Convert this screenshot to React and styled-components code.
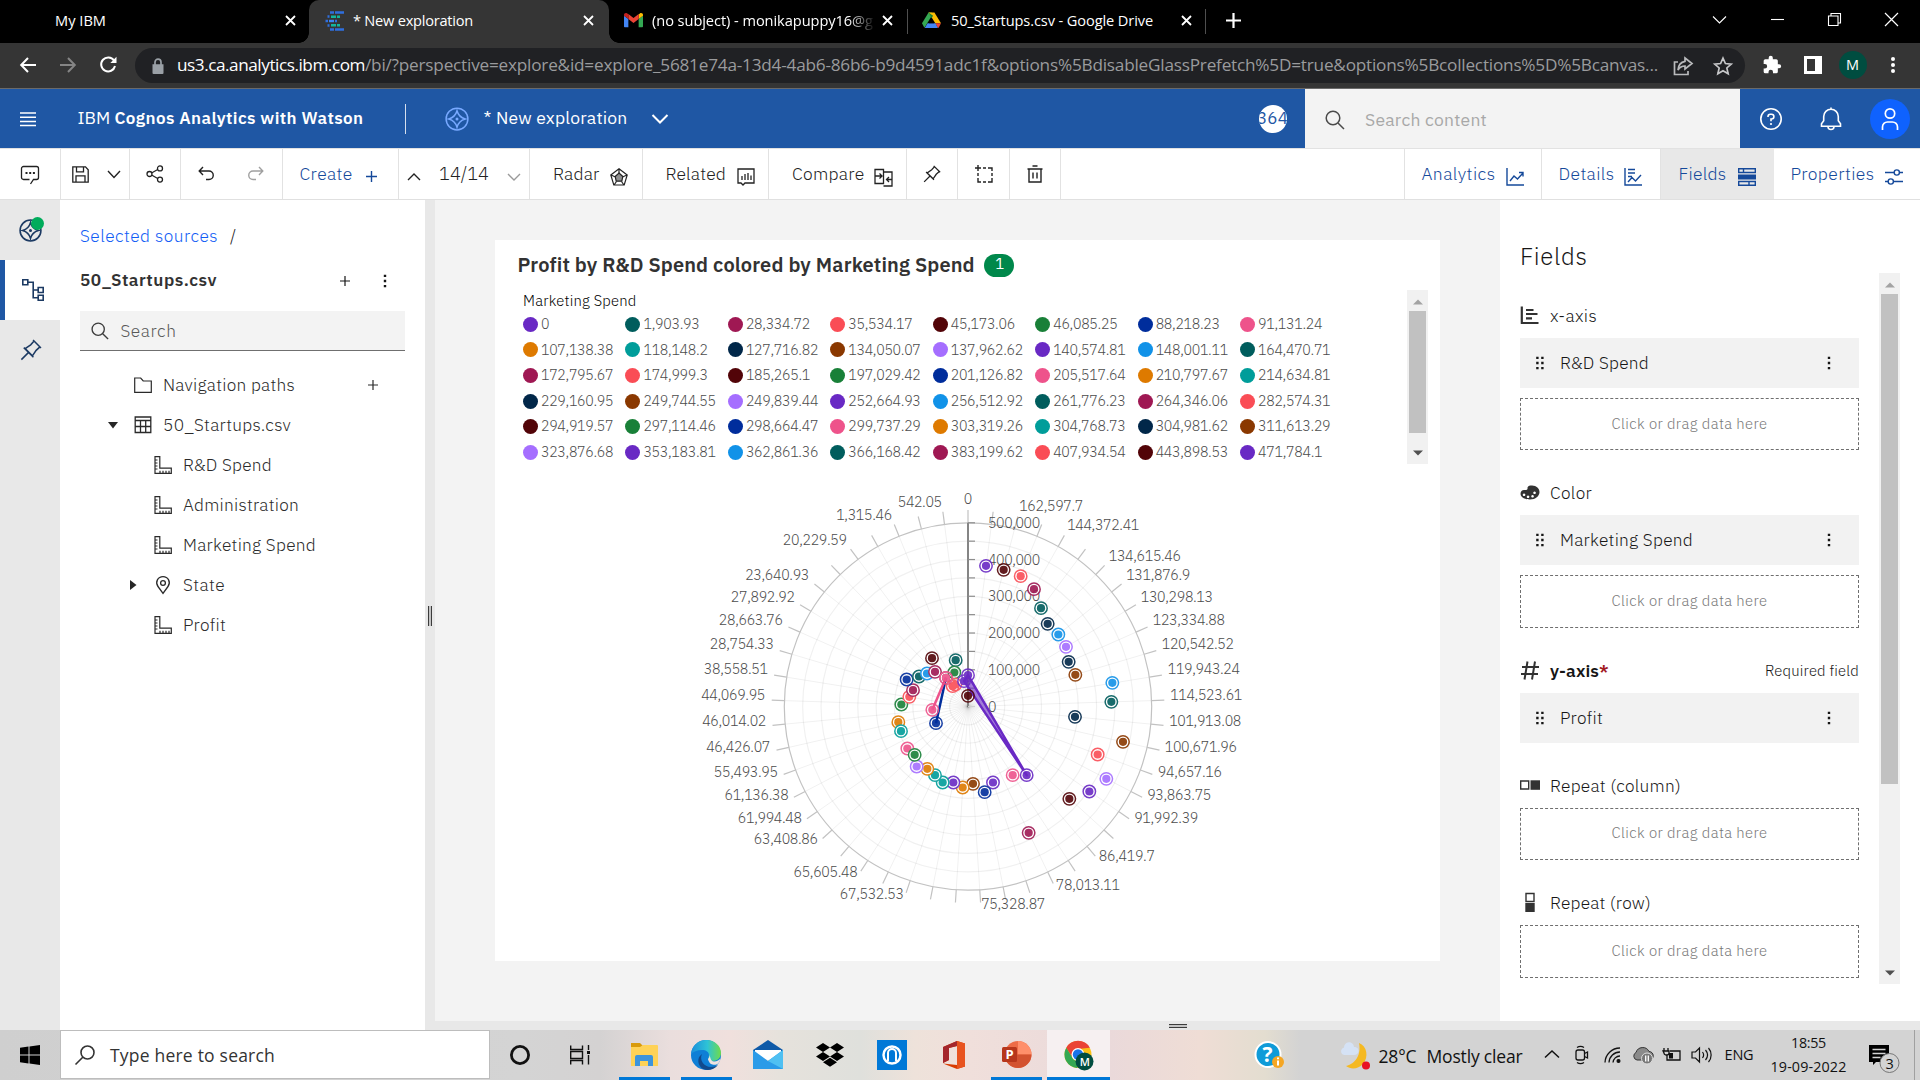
import React, { useLayoutEffect, useRef } from "react";
import styled, { createGlobalStyle, css } from "styled-components";

const Global = createGlobalStyle`
  *, *::before, *::after { box-sizing: border-box; }
  body { margin: 0; overflow: hidden; background: #fff; }
`;

const plex = `"IBM Plex Sans", "Noto Sans", "Open Sans", sans-serif`;
const segoe = `"Segoe UI", "Open Sans", "Noto Sans", sans-serif`;

/* ---------- shared parts ---------- */

const Label = styled.span`
  display: inline-block;
  flex: none;
  white-space: pre;
  margin-left: ${(p) => p.$ml || 0}px;
  font-size: ${(p) => p.$size || 17}px;
  font-weight: ${(p) => p.$weight || "inherit"};
  color: ${(p) => p.$color || "inherit"};
  line-height: 1.3;
`;

/* Spreads the tracking so that a label fills its measured width. */
function Text({ w, ml, size, weight, color, children }) {
  const ref = useRef(null);
  useLayoutEffect(() => {
    const el = ref.current;
    el.style.letterSpacing = "0px";
    const extra = w - el.getBoundingClientRect().width;
    el.style.letterSpacing = extra / el.textContent.length + "px";
  }, [w, children]);
  return (
    <Label ref={ref} $ml={ml} $size={size} $weight={weight} $color={color}>
      {children}
    </Label>
  );
}

const Svg = styled.svg`
  display: block;
  flex: none;
  overflow: visible;
  fill: none;
  stroke: ${(p) => (p.$sw === 0 ? "none" : "currentColor")};
  stroke-width: ${(p) => p.$sw ?? 2};
  margin-left: ${(p) => p.$ml || 0}px;
  margin-top: ${(p) => p.$mt || 0}px;
  color: ${(p) => p.$color || "inherit"};
`;

function Icon({ size = 20, box = 32, sw, ml, mt, color, children }) {
  return (
    <Svg width={size} height={size} viewBox={`0 0 ${box} ${box}`} $sw={sw} $ml={ml} $mt={mt} $color={color}>
      {children}
    </Svg>
  );
}

const Screen = styled.div`
  width: 1920px;
  height: 1080px;
  display: flex;
  flex-direction: column;
  overflow: hidden;
  font-family: ${plex};
  font-weight: 360;
  color: #161616;
`;

const Spacer = styled.div`
  flex: 1;
`;

/* ---------- browser ---------- */

const TabStrip = styled.div`
  flex: none;
  height: 43px;
  background: #000;
  color: #fff;
  display: flex;
  font-family: ${segoe};
  font-weight: 400;
`;

const Tab = styled.div`
  width: ${(p) => p.$w}px;
  flex: none;
  height: 43px;
  display: flex;
  align-items: center;
  padding: 0 ${(p) => p.$pr || 13}px 2px ${(p) => p.$pl || 15}px;
  justify-content: space-between;
  ${(p) =>
    p.$active &&
    css`
      position: relative;
      background: #353535;
      border-radius: 10px 10px 0 0;
      &::before,
      &::after {
        content: "";
        position: absolute;
        bottom: 0;
        width: 10px;
        height: 10px;
        left: -10px;
        background: radial-gradient(circle at 0 0, transparent 9.5px, #353535 10px);
      }
      &::after {
        left: auto;
        right: -10px;
        background: radial-gradient(circle at 100% 0, transparent 9.5px, #353535 10px);
      }
    `}
`;

const TabTitle = styled.div`
  display: flex;
  align-items: center;
  overflow: hidden;
  ${(p) => p.$fade && "-webkit-mask-image: linear-gradient(90deg, #000 90%, transparent 101%);"}
`;

const TabRule = styled.div`
  width: 1px;
  height: 25px;
  margin-top: 9px;
  background: #4f4f4f;
`;

const WindowButton = styled.div`
  width: 57.2px;
  height: 38px;
  display: flex;
  align-items: center;
  justify-content: center;
`;

const NavBar = styled.div`
  flex: none;
  height: 46px;
  background: #353535;
  border-bottom: 1px solid #6a6a6a;
  display: flex;
  align-items: center;
  padding: 0 0 1px 7px;
  color: #fff;
  font-family: ${segoe};
  font-weight: 400;
`;

const NavButton = styled.div`
  width: ${(p) => p.$w || 40}px;
  flex: none;
  display: flex;
  justify-content: center;
  color: ${(p) => p.$color || "#fff"};
`;

const UrlBar = styled.div`
  width: 1609.5px;
  flex: none;
  height: 35px;
  border-radius: 18px;
  background: #202124;
  display: flex;
  align-items: center;
  padding: 1px 12px 0 14px;
  margin-left: 7px;
  color: #9a9b9d;
`;

const Avatar = styled.div`
  width: 28px;
  height: 28px;
  border-radius: 50%;
  background: #004d40;
  color: #fff;
  display: flex;
  align-items: center;
  justify-content: center;
`;

const Close = () => (
  <Icon size={11} box={11} sw={1.8}>
    <path d="M1 1L10 10M10 1L1 10" />
  </Icon>
);

const CognosMark = () => (
  <Icon size={20} box={20} sw={2.4}>
    <path stroke="#2f6fde" d="M6 1.500h4M11 1.500h9M1.500 10h2.500M6 18.500h4M11 18.500h9M3.500 5.500h2M3.500 14.500h2M11 10h2" />
    <path stroke="#12b5a0" d="M7 5.700h5M13 5.700h3M7 14.300h5M13 14.300h3" />
    <path stroke="#3d86f2" d="M5 10h5" />
  </Icon>
);

const GmailMark = () => (
  <Icon size={19} box={24} sw={0}>
    <path fill="#4285f4" d="M1 20.500h4.500V10L0 6v13.500c0 .6.4 1 1 1z" />
    <path fill="#34a853" d="M18.500 20.500H23c.6 0 1-.4 1-1V6l-5.500 4z" />
    <path fill="#fbbc04" d="M18.500 4.500V10L24 6V4.800c0-2-2.300-3-4-1.800z" />
    <path fill="#ea4335" d="M5.500 10V3.800L12 8.700l6.500-4.900V10L12 15z" />
    <path fill="#c5221f" d="M0 4.800V6l5.500 4V3.800L4 3C2.300 1.800 0 2.800 0 4.800z" />
  </Icon>
);

const DriveMark = () => (
  <Icon size={19} box={24} sw={0}>
    <path fill="#34a853" d="M8.300 2h4L13 5 4.500 19 3 21 0 15.500z" />
    <path fill="#fbbc04" d="M8.300 2h7.400L24 15.500h-7.200z" />
    <path fill="#ea4335" d="M16.700 15.500H24L21 21l-1 .5z" />
    <path fill="#4285f4" d="M7 15.500h10l3 6H3.500z" />
    <path fill="#000" d="M12 9.500l3.300 6H8.700z" />
    <path fill="#188038" d="M8.300 2L12 9.300 14 6z" />
  </Icon>
);

function Browser() {
  return (
    <>
      <TabStrip>
        <Tab $w={309} $pl={55}>
          <Text w={51} size={14.6}>My IBM</Text>
          <Close />
        </Tab>
        <Tab $w={300} $active $pr={15}>
          <TabTitle>
            <CognosMark />
            <Text w={120} ml={9} size={14.6}>* New exploration</Text>
          </TabTitle>
          <Close />
        </Tab>
        <Tab $w={298} $pr={14}>
          <TabTitle $fade>
            <GmailMark />
            <Text w={221} ml={9} size={14.6}>(no subject) - monikapuppy16@g</Text>
          </TabTitle>
          <Close />
        </Tab>
        <TabRule />
        <Tab $w={297} $pl={14}>
          <TabTitle>
            <DriveMark />
            <Text w={202} ml={10} size={14.6}>50_Startups.csv - Google Drive</Text>
          </TabTitle>
          <Close />
        </Tab>
        <TabRule />
        <Tab $w={60} $pl={20}>
          <Icon size={15} box={15} sw={2.2}>
            <path d="M7.500 0v15M0 7.500h15" />
          </Icon>
        </Tab>
        <Spacer />
        <WindowButton>
          <Icon size={13} box={13} sw={1.1}>
            <path d="M0 3.500l6.500 6.500L13 3.500" />
          </Icon>
        </WindowButton>
        <WindowButton>
          <Icon size={13} box={13} sw={1.1}>
            <path d="M0 6.500h13" />
          </Icon>
        </WindowButton>
        <WindowButton>
          <Icon size={13} box={13} sw={1.1}>
            <path d="M.5 3h9.500v9.500H.5zM3 3V.5h9.500V10H10" />
          </Icon>
        </WindowButton>
        <WindowButton>
          <Icon size={13} box={13} sw={1.2}>
            <path d="M0 0l13 13M13 0L0 13" />
          </Icon>
        </WindowButton>
      </TabStrip>
      <NavBar>
        <NavButton $w={41}>
          <Icon size={16} box={16} sw={2}>
            <path d="M16 8H1.500M8 1L1.200 8 8 15" />
          </Icon>
        </NavButton>
        <NavButton $w={40} $color="#858585">
          <Icon size={16} box={16} sw={2}>
            <path d="M0 8h14.500M8 1l6.800 7L8 15" />
          </Icon>
        </NavButton>
        <NavButton $w={40}>
          <Icon size={18} box={18} sw={2}>
            <path d="M15 4.500A7 7 0 1 0 16 10" />
            <path d="M17.500 .8v6.200h-6.200z" fill="currentColor" stroke="none" />
          </Icon>
        </NavButton>
        <UrlBar>
          <Icon size={16} box={16} sw={0} color="#9aa0a6" ml={1}>
            <path fill="currentColor" d="M2.500 6.200h11V15a1 1 0 0 1-1 1h-9a1 1 0 0 1-1-1z" />
            <path d="M5 7V4.200a3 3 0 0 1 6 0V7" stroke="currentColor" strokeWidth="1.7" />
          </Icon>
          <Text w={188} ml={11} size={17.2} color="#fff">us3.ca.analytics.ibm.com</Text>
          <Text w={1293} size={17.2}>
            /bi/?perspective=explore&amp;id=explore_5681e74a-13d4-4ab6-86b6-b9d4591adc1f&amp;options%5BdisableGlassPrefetch%5D=true&amp;options%5Bcollections%5D%5Bcanvas...
          </Text>
          <Spacer />
          <Icon size={20} box={20} sw={1.7} color="#b9babc">
            <path d="M5 6H1.500v12.500H15V15" />
            <path d="M12 2l7 5.500-7 5.500v-3C8.500 10 6.500 11.500 5 14c.3-4.500 3-8 7-8.700z" />
          </Icon>
          <Icon size={20} box={24} sw={2} color="#c6c7c9" ml={20}>
            <path d="M12 2.500l2.900 6.500 7 .7-5.300 4.700 1.600 7L12 17.700l-6.200 3.700 1.600-7L2.100 9.700l7-.7z" />
          </Icon>
        </UrlBar>
        <NavButton $w={55}>
          <Icon size={20} box={24} sw={0}>
            <path
              fill="currentColor"
              d="M20.500 11H19V7a2 2 0 0 0-2-2h-4V3.500a2.500 2.500 0 0 0-5 0V5H4a2 2 0 0 0-2 2v3.800h1.500a2.700 2.700 0 0 1 0 5.400H2V20a2 2 0 0 0 2 2h3.800v-1.500a2.700 2.700 0 0 1 5.400 0V22H17a2 2 0 0 0 2-2v-4h1.500a2.500 2.500 0 0 0 0-5z"
            />
          </Icon>
        </NavButton>
        <NavButton $w={27}>
          <Icon size={18} box={18} sw={0}>
            <path fill="currentColor" fillRule="evenodd" d="M0 0h18v18H0zM3 3v12h8V3z" />
          </Icon>
        </NavButton>
        <NavButton $w={53}>
          <Avatar>
            <Text w={14} size={14.5}>M</Text>
          </Avatar>
        </NavButton>
        <NavButton $w={27}>
          <Icon size={18} box={18} sw={0}>
            <circle fill="currentColor" cx="9" cy="3" r="2" />
            <circle fill="currentColor" cx="9" cy="9" r="2" />
            <circle fill="currentColor" cx="9" cy="15" r="2" />
          </Icon>
        </NavButton>
      </NavBar>
    </>
  );
}

/* ---------- application header ---------- */

const AppHeader = styled.div`
  flex: none;
  height: 59px;
  background: #1f57a4;
  color: #fff;
  display: flex;
  align-items: center;
  padding-left: 20px;
`;

const HeaderRule = styled.div`
  width: 1px;
  height: 30px;
  margin: 0 39px 0 41px;
  background: #d5dfee;
`;

const TrialDays = styled.div`
  width: 28px;
  height: 28px;
  border-radius: 50%;
  background: #fff;
  color: #1f57a4;
  overflow: hidden;
  display: flex;
  align-items: center;
  justify-content: center;
  margin-right: 18.5px;
`;

const ContentSearch = styled.div`
  width: 435px;
  height: 59px;
  background: #f3f3f3;
  color: #4a4a4a;
  display: flex;
  align-items: center;
  padding: 3px 0 0 20px;
`;

const HeaderActions = styled.div`
  width: 180px;
  display: flex;
  align-items: center;
  padding-left: 18.5px;
`;

const UserBadge = styled.div`
  width: 40px;
  height: 40px;
  border-radius: 50%;
  background: #0f62fe;
  margin-left: 27px;
  display: flex;
  align-items: center;
  justify-content: center;
`;

const Compass = ({ size = 24, color, sw = 2 }) => (
  <Icon size={size} box={32} sw={sw} color={color}>
    <circle cx="16" cy="16" r="14.500" />
    <path d="M16 5c1.500 5.500 5.500 9.500 11 11-5.500 1.500-9.500 5.500-11 11-1.500-5.500-5.500-9.500-11-11 5.500-1.500 9.500-5.500 11-11z" />
    <circle cx="16" cy="16" r="1" fill="currentColor" />
  </Icon>
);

const SearchIcon = ({ size = 20, color }) => (
  <Icon size={size} box={20} sw={1.5} color={color}>
    <circle cx="8" cy="8" r="6.800" />
    <path d="M13 13l6 6" />
  </Icon>
);

function Header() {
  return (
    <AppHeader>
      <Icon size={16} box={16} sw={1.5}>
        <path d="M0 2h16M0 6.200h16M0 10.400h16M0 14.500h16" />
      </Icon>
      <Text w={37} ml={41.5} size={17.5} weight={400}>{"IBM "}</Text>
      <Text w={249} size={17} weight={600}>Cognos Analytics with Watson</Text>
      <HeaderRule />
      <Compass color="#78a9ff" size={24} />
      <Text w={144} ml={15} size={17.5} weight={400}>* New exploration</Text>
      <Icon size={16} box={16} sw={2} ml={24}>
        <path d="M.5 4L8 11.500 15.500 4" />
      </Icon>
      <Spacer />
      <TrialDays>
        <Text w={31} size={17} weight={400}>364</Text>
      </TrialDays>
      <ContentSearch>
        <SearchIcon />
        <Text w={122} ml={20} size={17.5} weight={400} color="#a8a8a8">Search content</Text>
      </ContentSearch>
      <HeaderActions>
        <Icon size={24} box={24} sw={1.6}>
          <circle cx="12" cy="12" r="10.200" />
          <path d="M9 10V9.500a2.300 2.300 0 0 1 2.300-2.300h1.200a2.400 2.400 0 0 1 0 4.800H12v2.200" />
          <circle cx="12" cy="17" r="1.100" fill="currentColor" stroke="none" />
        </Icon>
        <Icon size={24} box={24} sw={1.6} ml={36}>
          <path d="M2.500 19.200v-2.400l2.200-3V9.500a7.300 7.300 0 0 1 14.600 0v4.300l2.200 3v2.400zM9 19.500a3 3 0 0 0 6 0M12 2.500V.5" />
        </Icon>
        <UserBadge>
          <Icon size={24} box={24} sw={1.7}>
            <circle cx="12" cy="6.500" r="4.700" />
            <path d="M4.500 23v-3a5 5 0 0 1 5-5h5a5 5 0 0 1 5 5v3" />
          </Icon>
        </UserBadge>
      </HeaderActions>
    </AppHeader>
  );
}

/* ---------- toolbar ---------- */

const Toolbar = styled.div`
  flex: none;
  height: 52px;
  border-top: 1px solid #e2e2e2;
  border-bottom: 1px solid #e0e0e0;
  background: #fff;
  display: flex;
`;

const Tool = styled.div`
  width: ${(p) => p.$w}px;
  flex: none;
  display: flex;
  align-items: center;
  padding-left: ${(p) => p.$pl || 0}px;
  justify-content: ${(p) => (p.$pl ? "flex-start" : "center")};
  border-right: ${(p) => (p.$last ? 0 : 1)}px solid #e2e2e2;
  background: ${(p) => (p.$on ? "#e8e8e8" : "transparent")};
  color: ${(p) => (p.$blue ? "#15499a" : "#222")};
`;

const PinIcon = ({ size, color, sw = 2 }) => (
  <Icon size={size} box={32} sw={sw} color={color}>
    <path d="M19 1.500L30.500 13M2 30l10.500-10.500M5.500 12.500l14 14M20.500 3l-5 5.500-8 5.500L18 24.500l5.500-8 5.500-5" />
  </Icon>
);

const Dots = ({ ml, color }) => (
  <Icon size={14} box={14} sw={0} ml={ml} color={color}>
    <path fill="currentColor" d="M5.800 .7h2.400v2.400H5.800zM5.800 5.800h2.400v2.400H5.800zM5.800 10.900h2.400v2.400H5.800z" />
  </Icon>
);

function Tools() {
  return (
    <Toolbar>
      <Tool $w={61}>
        <Icon size={20} box={20} sw={1.3}>
          <path d="M9.500 15.500H3.500A2 2 0 0 1 1.500 13.500v-9a2 2 0 0 1 2-2h13a2 2 0 0 1 2 2v9a2 2 0 0 1-2 2H13.500L10.500 20" />
          <path d="M5.500 8h2v2h-2zM9.200 8h2v2h-2zM12.900 8h2v2h-2z" fill="currentColor" stroke="none" />
        </Icon>
      </Tool>
      <Tool $w={69} $pl={11}>
        <Icon size={17} box={17} sw={1.3}>
          <path d="M.8.8h12.700l2.700 3v12.400H.8zM4.500.8v5h7v-5M4 16V9.800h9V16" />
        </Icon>
        <Icon size={12} box={12} sw={1.4} ml={19}>
          <path d="M0 3l6 6.500L12 3" />
        </Icon>
      </Tool>
      <Tool $w={51}>
        <Icon size={18} box={18} sw={1.3}>
          <circle cx="3.500" cy="9" r="2.500" />
          <circle cx="14" cy="3.400" r="2.500" />
          <circle cx="14" cy="14.600" r="2.500" />
          <path d="M6 7.700l5.700-3.200M6 10.300l5.700 3.200" />
        </Icon>
      </Tool>
      <Tool $w={102} $pl={17}>
        <Icon size={16} box={16} sw={1.4}>
          <path d="M5 1L1.200 5 5 9M1.500 5H11a4 4 0 0 1 0 8.500H8" />
        </Icon>
        <Icon size={16} box={16} sw={1.4} ml={34} color="#a0a0a0">
          <path d="M11 1l3.800 4L11 9M14.500 5H5a4 4 0 0 0 0 8.500h3" />
        </Icon>
      </Tool>
      <Tool $w={116} $pl={16.5} $blue>
        <Text w={53} size={17.5}>Create</Text>
        <Icon size={11} box={11} sw={1.4} ml={13.5} mt={5}>
          <path d="M5.500 0v11M0 5.500h11" />
        </Icon>
      </Tool>
      <Tool $w={131} $pl={9}>
        <Icon size={12} box={12} sw={1.4} mt={5}>
          <path d="M0 9l6-6 6 6" />
        </Icon>
        <Text w={50} ml={19} size={18}>14/14</Text>
        <Icon size={12} box={12} sw={1.4} ml={19} mt={5} color="#9a9a9a">
          <path d="M0 3l6 6 6-6" />
        </Icon>
      </Tool>
      <Tool $w={113} $pl={23}>
        <Text w={46.5} size={17.5}>Radar</Text>
        <Icon size={18} box={18} sw={1.2} ml={10.5} mt={5}>
          <path d="M9 .8L17.200 7l-3 10H3.800l-3-10zM9 .8V6M17 7l-4.500 2M14 17l-2.500-3.500M4 17l2.500-3.500M1 7l4.500 2" />
          <path d="M9 5l3.800 3.500-1 4.700H6.200L5.200 8.500z" fill="currentColor" fillOpacity=".5" />
        </Icon>
      </Tool>
      <Tool $w={126} $pl={22.5}>
        <Text w={60.5} size={17.5}>Related</Text>
        <Icon size={18} box={18} sw={1.3} ml={10.5} mt={6}>
          <path d="M1 1h16v14H8l-2 2-2-2H1zM5 8v4M8 6v6M11 5v7M14 7.500V12" />
        </Icon>
      </Tool>
      <Tool $w={138} $pl={23}>
        <Text w={72.5} size={17.5}>Compare</Text>
        <Icon size={19} box={19} sw={1.3} ml={9.5} mt={6}>
          <path d="M1 1.500h8.500v14H1zM9.500 4H18v14H9.500M1.500 8H8M5.500 5.500L8 8l-2.500 2.500M18 11.500h-5M15 9l-2.500 2.500L15 14" />
        </Icon>
      </Tool>
      <Tool $w={51}>
        <PinIcon size={18} sw={2.2} />
      </Tool>
      <Tool $w={52}>
        <Icon size={18} box={18} sw={1.4}>
          <path d="M3 0v6M0 3h6M8 3h3M13 3h4v3M17 8v3M17 13v4h-4M11 17H8M6 17H3v-4M3 11V8" />
        </Icon>
      </Tool>
      <Tool $w={51}>
        <Icon size={18} box={18} sw={1.4}>
          <path d="M1.500 4h15M3 4v13h12V4M6.500 1h5M7 7.500v6M11 7.500v6" />
        </Icon>
      </Tool>
      <Tool $w={344} />
      <Tool $w={137} $pl={16.5} $blue>
        <Text w={74} size={17.5}>Analytics</Text>
        <Icon size={18} box={18} sw={1.4} ml={10.5} mt={6}>
          <path d="M1 0v17h17M4 13l4-5 3.500 3L17 5M13 4.500h4v4" />
        </Icon>
      </Tool>
      <Tool $w={119} $pl={16.5} $blue>
        <Text w={56} size={17.5}>Details</Text>
        <Icon size={18} box={18} sw={1.4} ml={9.5} mt={6}>
          <path d="M1 0v17h17M4 1.500h7M4 5h7M4 8.500h4M4 14l4-4.500 3.500 3.500L17 7" />
        </Icon>
      </Tool>
      <Tool $w={113} $pl={17.5} $blue $on $last>
        <Text w={48} size={17.5}>Fields</Text>
        <Icon size={18} box={18} sw={1.4} ml={11.5} mt={6}>
          <path d="M.7.7h16.600v3.800H.7zM.7 13.500h16.600v3.800H.7zM5.500 1v3.500M11 13.500v4" />
          <path d="M0 6.500h18v5H0z" fill="currentColor" stroke="none" />
        </Icon>
      </Tool>
      <Tool $w={145} $pl={16.5} $blue $last>
        <Text w={84} size={17.5}>Properties</Text>
        <Icon size={18} box={18} sw={1.4} ml={10.5} mt={6}>
          <path d="M0 4.500h9M14.500 4.500H18M0 13.500h3M8.500 13.500H18" />
          <circle cx="11.800" cy="4.500" r="2.600" />
          <circle cx="5.800" cy="13.500" r="2.600" />
        </Icon>
      </Tool>
    </Toolbar>
  );
}

/* ---------- left side ---------- */

const Workspace = styled.div`
  flex: none;
  height: 830px;
  display: flex;
`;

const Rail = styled.div`
  width: 60px;
  background: #e8e8e8;
  display: flex;
  flex-direction: column;
`;

const RailItem = styled.div`
  height: 60px;
  display: flex;
  align-items: center;
  justify-content: center;
  padding-left: ${(p) => (p.$on ? 0 : 1)}px;
  position: relative;
  color: #1c3a63;
  background: ${(p) => (p.$on ? "#fff" : "transparent")};
  border-left: ${(p) => (p.$on ? "5px solid #1f57a4" : "0")};
`;

const StatusDot = styled.div`
  position: absolute;
  left: 31px;
  top: 17px;
  width: 13px;
  height: 13px;
  border-radius: 50%;
  background: #00ac5b;
`;

const Sources = styled.div`
  width: 365px;
  background: #fff;
  padding: 25px 20px 0;
`;

const SourceLine = styled.div`
  display: flex;
  align-items: center;
  height: ${(p) => p.$h}px;
  padding-top: ${(p) => p.$pt || 0}px;
`;

const SearchBox = styled.div`
  height: 40px;
  background: #f3f3f3;
  border-bottom: 1px solid #6f6f6f;
  display: flex;
  align-items: center;
  padding: 1px 0 0 10.5px;
`;

const Tree = styled.div`
  padding-top: 14px;
`;

const TreeRow = styled.div`
  height: 40px;
  display: flex;
  align-items: center;
  padding-left: ${(p) => (p.$deep ? 45 : 25)}px;
  color: #2a2a2a;
`;

const Caret = styled.div`
  width: 18px;
  flex: none;
  display: flex;
  justify-content: center;
  padding-right: 2px;
  margin-right: 11px;
`;

const Splitter = styled.div`
  width: 10px;
  background: #e8e8e8;
  display: flex;
  justify-content: center;
  padding-top: 406px;
`;

const Grip = styled.div`
  width: ${(p) => (p.$flat ? 18 : 4)}px;
  height: ${(p) => (p.$flat ? 4 : 20)}px;
  border: 1px solid #3c3c3c;
  border-width: ${(p) => (p.$flat ? "1px 0" : "0 1px")};
  background: #c4c4c4;
`;

const Plus = ({ ml }) => (
  <Icon size={10} box={10} sw={1.2} ml={ml}>
    <path d="M5 0v10M0 5h10" />
  </Icon>
);

const Ruler = () => (
  <Icon size={18} box={18} sw={1.2}>
    <path d="M1 .7h4.800v11.500H17.300V17.300H1zM1 4h2.500M1 7h2.500M1 10h2.500M1 13h2.500M6 17.300v-2.500M9 17.300v-2.500M12 17.300v-2.500M15 17.300v-2.500" />
  </Icon>
);

const Folder = () => (
  <Icon size={18} box={18} sw={1.2}>
    <path d="M.7 2h6l2.500 3h8.100v11.300H.7z" />
  </Icon>
);

const Grid = () => (
  <Icon size={18} box={18} sw={1.3}>
    <path d="M1.200 1h15.600v15.500H1.200zM1 4.500h16M1 10.500h16M6.500 4.500v12M11.700 4.500v12" />
  </Icon>
);

const MapPin = () => (
  <Icon size={18} box={18} sw={1.3}>
    <path d="M9 17.300L4 10.500C.8 6 4 .7 9 .7s8.200 5.300 5 9.800z" />
    <circle cx="9" cy="7" r="2.400" />
  </Icon>
);

const fields = [
  ["Navigation paths", 132, Folder, false, ""],
  ["50_Startups.csv", 128, Grid, false, "down"],
  ["R&D Spend", 89, Ruler, true, ""],
  ["Administration", 116, Ruler, true, ""],
  ["Marketing Spend", 133, Ruler, true, ""],
  ["State", 42, MapPin, true, "right"],
  ["Profit", 43, Ruler, true, ""],
];

function LeftSide() {
  return (
    <>
      <Rail>
        <RailItem>
          <Compass size={23} sw={2.2} />
          <StatusDot />
        </RailItem>
        <RailItem $on>
          <Icon size={22} box={22} sw={1.6}>
            <path d="M.8.8h5v5h-5zM16.200 8.500h5v5h-5zM16.200 16.200h5v5h-5zM6 3.300h5.200v15.500h5M11.200 11h5" />
          </Icon>
        </RailItem>
        <RailItem>
          <PinIcon size={22} sw={2.2} />
        </RailItem>
      </Rail>
      <Sources>
        <SourceLine $h={22}>
          <Text w={138} size={17.3} color="#0f5cf5">Selected sources</Text>
          <Text w={7} ml={12} size={17.3}>/</Text>
        </SourceLine>
        <SourceLine $h={64} $pt={3}>
          <Text w={137} size={17.2} weight={600} color="#323232">50_Startups.csv</Text>
          <Plus ml={123} />
          <Dots ml={28} />
        </SourceLine>
        <SearchBox>
          <SearchIcon size={18} color="#3c3c3c" />
          <Text w={56} ml={12} size={17.3} color="#585858">Search</Text>
        </SearchBox>
        <Tree>
          {fields.map(([name, w, Glyph, deep, caret]) => (
            <TreeRow key={name} $deep={deep}>
              <Caret>
                {caret && (
                  <Icon size={10} box={10} sw={0}>
                    <path fill="#262626" d={caret === "down" ? "M0 2h10L5 8.500z" : "M2 0v10l6.500-5z"} />
                  </Icon>
                )}
              </Caret>
              <Glyph />
              <Text w={w} ml={11} size={17.3}>{name}</Text>
              {name === "Navigation paths" && <Plus ml={73} />}
            </TreeRow>
          ))}
        </Tree>
      </Sources>
      <Splitter>
        <Grip />
      </Splitter>
    </>
  );
}

/* ---------- chart ---------- */

const MainArea = styled.div`
  width: 1485px;
  display: flex;
  flex-direction: column;
`;

const MainRow = styled.div`
  height: 821px;
  display: flex;
`;

const Canvas = styled.div`
  width: 1065px;
  background: #f3f3f3;
  padding: 40px 60px 0;
`;

const Card = styled.div`
  width: 945px;
  height: 721px;
  background: #fff;
  padding-top: 12px;
`;

const CardTitle = styled.div`
  height: 26px;
  display: flex;
  align-items: center;
  padding-left: 22.5px;
  color: #323232;
`;

const CountBadge = styled.div`
  width: 30px;
  height: 23px;
  border-radius: 12px;
  background: #00884b;
  color: #fff;
  margin-left: 9.5px;
  display: flex;
  align-items: center;
  justify-content: center;
  padding: 0 0 2px 1px;
`;

const LegendArea = styled.div`
  margin: 12px 12px 0 0;
  padding-left: 28px;
  display: flex;
  justify-content: space-between;
  height: 174px;
`;

const LegendTitle = styled.div`
  height: 20px;
  color: #000;
`;

const LegendGrid = styled.div`
  display: grid;
  grid-template-columns: repeat(8, 102.45px);
  grid-auto-rows: 25.6px;
  padding-top: 1px;
`;

const LegendItem = styled.div`
  display: flex;
  align-items: center;
  gap: 3px;
  padding-top: 1px;
  color: #4c4c4c;
`;

const Swatch = styled.div`
  width: 15px;
  height: 15px;
  border-radius: 50%;
  background: ${(p) => p.$c};
`;

const ScrollTrack = styled.div`
  width: 21px;
  flex: none;
  height: ${(p) => p.$h}px;
  background: #f1f1f1;
  display: flex;
  flex-direction: column;
  align-items: center;
`;

const ScrollArrow = styled.div`
  height: 21px;
  display: flex;
  align-items: center;
`;

const ScrollThumb = styled.div`
  width: 17px;
  height: ${(p) => p.$h}px;
  background: #c1c1c1;
`;

function Scrollbar({ h, thumb }) {
  return (
    <ScrollTrack $h={h}>
      <ScrollArrow>
        <Icon size={10} box={10} sw={0} color="#a3a3a3">
          <path fill="currentColor" d="M0 8.500h10L5 3.500z" />
        </Icon>
      </ScrollArrow>
      <ScrollThumb $h={thumb} />
      <Spacer />
      <ScrollArrow>
        <Icon size={10} box={10} sw={0} color="#505050">
          <path fill="currentColor" d="M0 1.500h10L5 6.500z" />
        </Icon>
      </ScrollArrow>
    </ScrollTrack>
  );
}

const C = {
  P: "#6929c4", T: "#005d5d", M: "#9f1853", R: "#fa4d56", D: "#520408", G: "#198038", B: "#002d9c",
  K: "#ee538b", O: "#de7a00", A: "#009d9a", N: "#012749", W: "#8a3800", L: "#a56eff", S: "#1192e8",
};

const legendColors = "PTMRDGBK" + "OANWLPST" + "MRDGBKOA" + "NWLPSTMR" + "DGBKOANW" + "LPSTMRDP";

const legendValues = [
  "0", "1,903.93", "28,334.72", "35,534.17", "45,173.06", "46,085.25", "88,218.23", "91,131.24",
  "107,138.38", "118,148.2", "127,716.82", "134,050.07", "137,962.62", "140,574.81", "148,001.11", "164,470.71",
  "172,795.67", "174,999.3", "185,265.1", "197,029.42", "201,126.82", "205,517.64", "210,797.67", "214,634.81",
  "229,160.95", "249,744.55", "249,839.44", "252,664.93", "256,512.92", "261,776.23", "264,346.06", "282,574.31",
  "294,919.57", "297,114.46", "298,664.47", "299,737.29", "303,319.26", "304,768.73", "304,981.62", "311,613.29",
  "323,876.68", "353,183.81", "362,861.36", "366,168.42", "383,199.62", "407,934.54", "443,898.53", "471,784.1",
];

const numberWidth = (s) =>
  [...s].reduce((sum, ch) => sum + (ch === "," || ch === "." ? 3.9 : 8.05), 0);

const ChartSvg = styled.svg`
  display: block;
  font-family: ${plex};
  font-size: 14.2px;
  fill: #4c4c4c;
`;

const CX = 473;
const CY = 242.5;
const R = 183.7;
const SPOKES = 49;
const polar = (i, r) => {
  const a = (i / SPOKES) * Math.PI * 2;
  return [CX + Math.sin(a) * r, CY - Math.cos(a) * r];
};

/* x, y offsets from the hub in thirds of a pixel, and the colour key */
const points = [
  [54, -422, "P"], [107, -410, "D"], [158, -391, "R"], [198, -352, "M"], [219, -295, "T"], [239, -248, "N"],
  [271, -216, "S"], [294, -179, "L"], [302, -134, "N"], [322, -95, "W"], [433, -71, "S"], [430, -14, "T"],
  [321, 31, "N"], [465, 106, "W"], [389, 144, "R"], [415, 217, "L"], [364, 255, "P"], [304, 277, "D"],
  [182, 379, "M"], [176, 206, "P"], [134, 206, "K"], [75, 228, "P"], [50, 257, "B"], [15, 232, "W"],
  [-16, 243, "O"], [-44, 228, "P"], [-76, 228, "A"], [-99, 206, "A"], [-122, 187, "O"], [-154, 180, "L"],
  [-182, 126, "K"], [-160, 145, "G"], [-209, 47, "O"], [-201, 74, "A"], [-200, -6, "G"], [-176, -29, "R"],
  [-165, -49, "M"], [-184, -81, "B"], [-147, -90, "T"], [-123, -99, "S"], [-99, -104, "M"], [-108, -145, "D"],
  [-37, -139, "T"], [-41, -102, "G"], [-46, -61, "R"], [-38, -66, "R"], [-12, -76, "P"], [0, -94, "P"],
  [0, -32, "D"], [-107, 10, "K"], [-96, 50, "B"], [-66, -86, "M"], [-66, -86, "K"],
];

/* left edge and middle of each outer label, in thirds of a pixel */
const leftLabels = [
  ["542.05", 625, 64], ["1,315.46", 440, 103], ["20,229.59", 280, 178], ["23,640.93", 167, 285],
  ["27,892.92", 124, 351], ["28,663.76", 88, 420], ["28,754.33", 61, 492], ["38,558.51", 43, 567],
  ["44,069.95", 35, 645], ["46,014.02", 38, 723], ["46,426.07", 50, 801], ["55,493.95", 73, 876],
  ["61,136.38", 105, 945], ["61,994.48", 145, 1014], ["63,408.86", 193, 1075], ["65,605.48", 312, 1176],
  ["67,532.53", 451, 1242],
].map(([t, x, y]) => [t, 194.5 + x / 3, 16.4 + y / 3]);

const rightLabels = [
  ["0", 13, 57], ["162,597.7", 179, 78], ["144,372.41", 323, 135], ["134,615.46", 448, 228],
  ["131,876.9", 500, 285], ["130,298.13", 544, 351], ["123,334.88", 580, 420], ["120,542.52", 607, 492],
  ["119,943.24", 625, 567], ["114,523.61", 632, 645], ["101,913.08", 629, 723], ["100,671.96", 616, 801],
  ["94,657.16", 595, 876], ["93,863.75", 563, 945], ["91,992.39", 524, 1014], ["86,419.7", 418, 1128],
  ["78,013.11", 289, 1213], ["75,328.87", 65, 1272],
].map(([t, x, y]) => [t, 464.5 + x / 3, 16.4 + y / 3]);

const at = (x, y) => `${CX + x / 3} ${CY + y / 3}`;

function Radar() {
  return (
    <ChartSvg width="945" height="480" viewBox="0 0 945 480">
      <g fill="none" stroke="#000" strokeOpacity=".06">
        {Array.from({ length: 9 }, (_, i) => (
          <circle key={i} cx={CX} cy={CY} r={((i + 1) * R) / 10} strokeWidth="1.2" />
        ))}
        {Array.from({ length: SPOKES }, (_, i) => {
          const [x, y] = polar(i, R);
          return <line key={i} x1={CX} y1={CY} x2={x} y2={y} />;
        })}
      </g>
      <g fill="none" stroke="#c2c2c2" strokeWidth="1.2">
        <circle cx={CX} cy={CY} r={R} />
        {Array.from({ length: SPOKES }, (_, i) => {
          const [x1, y1] = polar(i, R);
          const [x2, y2] = polar(i, R + 12.7);
          return <line key={i} x1={x1} y1={y1} x2={x2} y2={y2} />;
        })}
      </g>
      <line x1={CX} y1={CY} x2={CX} y2={CY - R} stroke="#858585" strokeWidth="2" />
      {Array.from({ length: 11 }, (_, i) => (
        <line key={i} x1={CX} x2={CX + 7} y1={CY - (i * R) / 10} y2={CY - (i * R) / 10} stroke={i ? "#8d8d8d" : "#d0d0d0"} strokeWidth="1.2" />
      ))}
      {["0", "100,000", "200,000", "300,000", "400,000", "500,000"].map((t, i) => (
        <text key={t} x={CX + 20} y={CY + 5 - (i * R) / 5} textLength={numberWidth(t)}>
          {t}
        </text>
      ))}
      {[...leftLabels, ...rightLabels].map(([t, x, y]) => (
        <text key={t} x={x} y={y + 5} textLength={numberWidth(t)}>
          {t}
        </text>
      ))}
      <g fill="none" strokeWidth="2.5" strokeLinejoin="round">
        <path d={`M${at(-66, -86)}L${at(-96, 50)}`} stroke={C.B} />
        <path d={`M${at(-66, -86)}L${at(-107, 10)}`} stroke={C.K} />
        <path d={`M${at(0, -94)}L${at(176, 206)}L${at(-12, -76)}z`} stroke={C.P} fill={C.P} fillOpacity=".6" />
      </g>
      <g opacity=".9">
        {points.map(([x, y, c], i) => (
          <g key={i} transform={`translate(${CX + x / 3} ${CY + y / 3})`}>
            <circle r="6.2" fill={Math.hypot(x, y) < 110 ? "none" : "#fff"} stroke={C[c]} strokeWidth="1.5" />
            <circle r="4.1" fill={C[c]} />
          </g>
        ))}
      </g>
    </ChartSvg>
  );
}

function ChartCard() {
  return (
    <Canvas>
      <Card>
        <CardTitle>
          <Text w={457} size={20} weight={600}>Profit by R&amp;D Spend colored by Marketing Spend</Text>
          <CountBadge>
            <Text w={9} size={15} weight={400}>1</Text>
          </CountBadge>
        </CardTitle>
        <LegendArea>
          <div>
            <LegendTitle>
              <Text w={113.5} size={14.8}>Marketing Spend</Text>
            </LegendTitle>
            <LegendGrid>
              {legendValues.map((v, i) => (
                <LegendItem key={v}>
                  <Swatch $c={C[legendColors[i]]} />
                  <Text w={numberWidth(v)} size={14.2}>{v}</Text>
                </LegendItem>
              ))}
            </LegendGrid>
          </div>
          <Scrollbar h={174} thumb={122} />
        </LegendArea>
        <Radar />
      </Card>
    </Canvas>
  );
}

/* ---------- fields panel ---------- */

const FieldsPanel = styled.div`
  width: 420px;
  background: #fff;
  padding: 36px 20px 0;
`;

const PanelTitle = styled.div`
  height: 37px;
  display: flex;
  padding-top: 5px;
`;

const PanelBody = styled.div`
  display: flex;
  justify-content: space-between;
  height: 711px;
`;

const Slots = styled.div`
  width: 339px;
`;

const Slot = styled.div`
  display: flex;
  flex-direction: column;
  gap: 10px;
`;

const SlotHead = styled.div`
  height: 65px;
  margin-bottom: -10px;
  display: flex;
  align-items: center;
  padding-top: 21px;
`;

const Field = styled.div`
  height: 50px;
  background: #f2f2f2;
  display: flex;
  align-items: center;
  padding: 0 23px 0 15px;
`;

const DropZone = styled.div`
  height: 52.4px;
  border: 1px dashed #6f6f6f;
  display: flex;
  align-items: center;
  justify-content: center;
  padding-bottom: 2px;
  color: #787878;
`;

const DragDots = () => (
  <Icon size={14} box={14} sw={0} ml={-2}>
    <path
      fill="currentColor"
      d="M3.200 .7h2.400v2.400H3.200zM3.200 5.800h2.400v2.400H3.200zM3.200 10.900h2.400v2.400H3.200zM8.200 .7h2.400v2.400H8.200zM8.200 5.800h2.400v2.400H8.200zM8.200 10.900h2.400v2.400H8.200z"
    />
  </Icon>
);

const slotIcons = {
  x: <path d="M1.800 .5v17M.8 17h17.700M6 4h7.500M6 8h11.500M6 12.300h6" strokeWidth="2.2" />,
  color: (
    <path
      fill="currentColor"
      fillRule="evenodd"
      stroke="none"
      d="M7.500 4.500C8 2.800 10 2.500 12 2.500c4.500 0 7.500 3 7.500 6.500 0 4-4 7.500-9.500 7.500S.5 14 .5 11c0-2.500 1.500-4 3.500-4 1.500 0 4 .5 3.500-2.500zM14.500 8.500a1.300 1.300 0 1 0 .1 0zM12.500 12a1.300 1.300 0 1 0 .1 0zM8 12.500a1.300 1.300 0 1 0 .1 0zM4 10.500a1.300 1.300 0 1 0 .1 0z"
    />
  ),
  y: <path d="M7.500 .5l-3 18M15 .5l-3 18M2 6h17M1 13h17" strokeWidth="2" />,
  col: (
    <>
      <path d="M.7 5h8v8h-8z" strokeWidth="1.4" />
      <path d="M10.500 4.300H20v9.500h-9.500z" fill="currentColor" stroke="none" />
    </>
  ),
  row: (
    <>
      <path d="M6 .5h8v8H6z" strokeWidth="1.4" />
      <path d="M5.300 10h9.400v9H5.300z" fill="currentColor" stroke="none" />
    </>
  ),
};

const slots = [
  { icon: "x", name: "x-axis", w: 47, field: "R&D Spend", fw: 89, drop: true },
  { icon: "color", name: "Color", w: 42, field: "Marketing Spend", fw: 133, drop: true },
  { icon: "y", name: "y-axis", w: 49, required: true, field: "Profit", fw: 43 },
  { icon: "col", name: "Repeat (column)", w: 131, drop: true },
  { icon: "row", name: "Repeat (row)", w: 101, drop: true },
];

function RightSide() {
  return (
    <FieldsPanel>
      <PanelTitle>
        <Text w={67.5} size={24}>Fields</Text>
      </PanelTitle>
      <PanelBody>
        <Slots>
          {slots.map((s) => (
            <Slot key={s.name}>
              <SlotHead>
                <Icon size={20} box={20} color="#323232">{slotIcons[s.icon]}</Icon>
                <Text w={s.w} ml={10} size={17.3} weight={s.required && 600}>{s.name}</Text>
                {s.required && (
                  <>
                    <Text w={9} size={17.3} weight={600} color="#a2191f">*</Text>
                    <Spacer />
                    <Text w={94} size={14.8}>Required field</Text>
                  </>
                )}
              </SlotHead>
              {s.field && (
                <Field>
                  <DragDots />
                  <Text w={s.fw} ml={13} size={17.3}>{s.field}</Text>
                  <Spacer />
                  <Dots />
                </Field>
              )}
              {s.drop && (
                <DropZone>
                  <Text w={156} size={14.8}>Click or drag data here</Text>
                </DropZone>
              )}
            </Slot>
          ))}
        </Slots>
        <Scrollbar h={711} thumb={490} />
      </PanelBody>
    </FieldsPanel>
  );
}

const BottomStrip = styled.div`
  height: 9px;
  background: #e8e8e8;
  display: flex;
  align-items: center;
  justify-content: center;
`;

/* ---------- taskbar ---------- */

const Taskbar = styled.div`
  flex: none;
  height: 50px;
  display: flex;
  font-family: ${segoe};
  font-weight: 400;
  color: #111;
  background: linear-gradient(
    90deg,
    #cfcfcf 0, #d4d4d4 520px, #d4d2d2 600px, #eadedd 670px, #f0e0dd 730px, #e6e2dc 780px, #dfe0dc 860px,
    #eee2da 915px, #f0dfdb 970px, #ead9da 1110px, #efddd5 1200px, #e3ddd0 1265px, #d3d3d3 1300px, #d3d3d3 100%
  );
`;

const TaskItem = styled.div`
  width: ${(p) => p.$w || 62}px;
  flex: none;
  height: 50px;
  display: flex;
  align-items: center;
  justify-content: center;
  background: ${(p) => (p.$lit ? "#f6f0f1" : "transparent")};
  box-shadow: ${(p) => (p.$lit ? "inset 0 -3px #0078d7" : "none")};
`;

const OpenItem = styled.div`
  width: 62px;
  flex: none;
  height: 50px;
  padding-top: 9px;
  display: flex;
  flex-direction: column;
  align-items: center;
  justify-content: space-between;
`;

const OpenMark = styled.div`
  width: 51px;
  height: 3px;
  background: #0078d7;
`;

const TaskSearch = styled.div`
  width: 430px;
  flex: none;
  height: 49px;
  background: #fff;
  border: 1px solid #bdbdbd;
  display: flex;
  align-items: center;
  padding: 1px 0 0 14px;
  color: #333;
`;

const TrayRow = styled.div`
  display: flex;
  align-items: center;
  margin-left: 138.5px;
`;

const Weather = styled.div`
  display: flex;
  align-items: center;
  margin-left: 51px;
  padding-top: 2px;
  width: 199px;
`;

const Clock = styled.div`
  width: 80px;
  margin-left: 15px;
  display: flex;
  flex-direction: column;
  align-items: center;
  justify-content: space-between;
  padding: 4px 0 3px;
`;

const Notices = styled.div`
  width: 46px;
  margin-left: 20px;
  display: flex;
  align-items: center;
  border-right: 1px solid #a0a0a0;
`;

function Tray() {
  return (
    <>
      <TaskItem $w={40}>
        <Icon size={30} box={30} sw={0}>
          <circle cx="14" cy="14.500" r="12.500" fill="#0f9bd8" stroke="#fff" strokeWidth="2" />
          <text x="8.500" y="22" fontSize="21" fontWeight="700" fill="#fff">?</text>
          <circle cx="24" cy="22" r="6" fill="#f5a623" />
          <path d="M24 20.500v5M24 17.500v1.700" stroke="#fff" strokeWidth="2" />
        </Icon>
      </TaskItem>
      <Weather>
        <Icon size={30} box={30} sw={0}>
          <path fill="#f5b921" d="M19 2c8 3 10 14 4 21-4.500 5-12 6-17 2 6-1 16-8 13-23z" />
          <path fill="#d5e2f5" d="M2 13a4 4 0 0 1 2-6.500A5 5 0 0 1 14 6c3 0 5 2 4.500 4.500S16 14 14 14H4z" />
          <circle cx="26" cy="24.500" r="4" fill="#e81123" />
        </Icon>
        <Text w={38} ml={9} size={17.5}>28°C</Text>
        <Text w={96} ml={10} size={17.5}>Mostly clear</Text>
      </Weather>
      <TaskItem $w={26}>
        <Icon size={14} box={14} sw={1.5} mt={-2}>
          <path d="M0 10.500L7 4l7 6.500" />
        </Icon>
      </TaskItem>
      <TaskItem $w={34}>
        <Icon size={18} box={18} sw={1.3}>
          <rect x="3" y="4" width="8.500" height="10" rx="2" />
          <path d="M11.500 7.500l3-1.500v6l-3-1.500M4 1.500c2-1.300 5-1.300 7 0M4 16.500c2 1.300 5 1.300 7 0" />
        </Icon>
      </TaskItem>
      <TaskItem $w={28}>
        <Icon size={18} box={18} sw={1.3}>
          <path d="M1 16.500A15 15 0 0 1 16 2M5 16.500A11 11 0 0 1 16 6M9 16.500a7 7 0 0 1 7-6.500" />
          <circle cx="14.500" cy="15" r="1.400" fill="currentColor" />
        </Icon>
      </TaskItem>
      <TaskItem $w={32}>
        <Icon size={20} box={20} sw={1}>
          <path fill="#8a8a8a" stroke="#333" d="M4 15a4 4 0 0 1-1-7.500 7 7 0 0 1 13-1 4 4 0 0 1 0 8.500z" />
          <circle cx="14" cy="13.500" r="5.500" fill="#777" stroke="#ddd" />
          <path d="M12.700 10.500v6M15.300 10.500v6" stroke="#fff" strokeWidth="1.3" />
        </Icon>
      </TaskItem>
      <TaskItem $w={26}>
        <Icon size={18} box={18} sw={1.3}>
          <path d="M7 5h10v9H4V9M1 2v3M5 2v3M0 5h6v2a2 2 0 0 1-2 2H3a2 2 0 0 1-2-2z" />
          <path d="M6 7h4v5.500H6z" fill="currentColor" stroke="none" />
        </Icon>
      </TaskItem>
      <TaskItem $w={34}>
        <Icon size={20} box={20} sw={1.2}>
          <path d="M0 7h3.500L7.500 3v14l-4-4H0zM10.500 7c1.500 2 1.500 4 0 6M13.500 5c2.500 3 2.500 7 0 10M16.500 3c3.500 4 3.500 10 0 14" />
        </Icon>
      </TaskItem>
      <Text w={29} ml={6} size={14.5}>ENG</Text>
    </>
  );
}

function TaskbarView() {
  return (
    <Taskbar>
      <TaskItem $w={60}>
        <Icon size={20} box={20} sw={0}>
          <path fill="#000" d="M0 2.800L8.500 1.600v7.900H0zM9.500 1.500L20 0v9.500H9.500zM0 10.500h8.500v7.900L0 17.200zM9.500 10.500H20V20L9.500 18.500z" />
        </Icon>
      </TaskItem>
      <TaskSearch>
        <Icon size={20} box={20} sw={1.6}>
          <circle cx="12.500" cy="7.500" r="6.500" />
          <path d="M8 12L.5 19.500" />
        </Icon>
        <Text w={165} ml={15} size={17.5}>Type here to search</Text>
      </TaskSearch>
      <TaskItem $w={60}>
        <Icon size={20} box={20} sw={2.8}>
          <circle cx="10" cy="10" r="8.600" />
        </Icon>
      </TaskItem>
      <TaskItem $w={63}>
        <Icon size={20} box={20} sw={1.4} ml={-3}>
          <path d="M.7.5v4h11.800v-4M.7 6.500h11.800v7H.7zM.7 19.500v-4h11.800v4M18.500 0v5M18.500 10v9.500" />
          <path d="M17 6h3v3h-3z" fill="currentColor" stroke="none" />
        </Icon>
      </TaskItem>
      <OpenItem>
        <Icon size={28} box={28} sw={0} mt={3}>
          <path fill="#d99a0b" d="M1 1h9l3 3v4H1z" />
          <path fill="#ffd257" d="M1 5h9l3-2h14a1 1 0 0 1 1 1v20H1z" />
          <path fill="#3d94dd" d="M5 24V15a2 2 0 0 1 2-2h14a2 2 0 0 1 2 2v9h-5v-5h-8v5z" />
        </Icon>
        <OpenMark />
      </OpenItem>
      <OpenItem>
        <Icon size={30} box={30} sw={0} mt={1}>
          <defs>
            <linearGradient id="edgeTop" x1="0" x2="1">
              <stop offset="0" stopColor="#1c8fdc" />
              <stop offset=".55" stopColor="#2ec3d6" />
              <stop offset="1" stopColor="#6fdc4a" />
            </linearGradient>
          </defs>
          <circle cx="15" cy="15" r="15" fill="#0f7fd6" />
          <path fill="url(#edgeTop)" d="M0 14C1 5 8 0 15 0c9 0 15 6 15 13 0 5-4 8-8 8-3 0-5-1-5-2s1-1.500 1-4c0-3-3-5-7-5-5 0-9 2-11 4z" />
          <path fill="#114a8c" d="M11 14c-3 6 2 13 9 13 3 0 5-1 7-2-4 5-10 6-15 4-5-3-7-11-1-15z" />
          <path fill="#eee3e0" d="M17 19c1-1 1.500-2 1.500-4 1 3 1.500 6.500 4.500 6.500 3 0 5.500-2 6.500-3-1 6-5 7-8 6-2 0-4-3-4.500-5.500z" />
        </Icon>
        <OpenMark />
      </OpenItem>
      <TaskItem>
        <Icon size={30} box={30} sw={0}>
          <path fill="#0f5aa8" d="M0 10L15 0l15 10v5H0z" />
          <path fill="#fff" d="M2 10h26v7L15 20 2 16z" />
          <path fill="#2b9be8" d="M0 10l15 11 15-11v19H0z" />
          <path fill="#4fc0f2" d="M15 21l15-11v19z" />
        </Icon>
      </TaskItem>
      <TaskItem>
        <Icon size={28} box={28} sw={0}>
          <path
            fill="#000"
            d="M7 2l7 4.500L7 11 0 6.500zM21 2l7 4.500-7 4.500-7-4.500zM7 11l7 4.500L7 20l-7-4.500zM21 11l7 4.500-7 4.500-7-4.500zM14 16.800l7 4.500-7 4.500-7-4.500z"
          />
        </Icon>
      </TaskItem>
      <TaskItem>
        <Icon size={30} box={30} sw={0}>
          <path fill="#0078d7" d="M0 0h30v30H0z" />
          <circle cx="15" cy="15" r="8.500" fill="none" stroke="#fff" strokeWidth="2.500" />
          <path fill="none" stroke="#fff" strokeWidth="2" d="M11 21v-8a4 4 0 0 1 8 0v8" />
        </Icon>
      </TaskItem>
      <TaskItem>
        <Icon size={28} box={28} sw={0}>
          <path fill="#d83b01" d="M17 0l8 2.500v23L17 28 3 22.500 17 24V5l-8 2v12l-6 3V6z" />
          <path fill="#a4262c" d="M3 6L17 0v5L9 7v12l-6 3z" />
          <path fill="#e8531f" d="M17 0l8 2.500v23L17 28z" />
        </Icon>
      </TaskItem>
      <OpenItem>
        <Icon size={29} box={29} sw={0} mt={1}>
          <circle cx="16" cy="14.500" r="13.500" fill="#ed6c47" />
          <path fill="#ff8f6b" d="M16 1a13.500 13.500 0 0 1 13.500 13.500H16z" />
          <path fill="#d35230" d="M2.500 14.500h27a13.500 13.500 0 0 1-27 0z" />
          <rect x="0" y="7" width="15" height="15" rx="1.500" fill="#b7361b" />
          <text x="3.500" y="19.300" fontSize="13" fontWeight="700" fill="#fff">P</text>
        </Icon>
        <OpenMark />
      </OpenItem>
      <TaskItem $w={63} $lit>
        <Icon size={30} box={30} sw={0}>
          <circle cx="14" cy="14.500" r="13.500" fill="#fbc116" />
          <path fill="#ea4335" d="M2.300 7.700a13.500 13.500 0 0 1 23.500 0L14 9 8 17z" />
          <path fill="#34a853" d="M2.300 7.700A13.500 13.500 0 0 0 13 28l5-8-4 1c-3 0-5-1.500-6-4z" />
          <circle cx="14" cy="14.500" r="6.500" fill="#fff" />
          <circle cx="14" cy="14.500" r="5.200" fill="#1a73e8" />
          <circle cx="20.500" cy="21.500" r="9" fill="#004d40" />
          <text x="15.800" y="25.700" fontSize="11" fontWeight="600" fill="#fff">M</text>
        </Icon>
      </TaskItem>
      <TrayRow>
        <Tray />
      </TrayRow>
      <Clock>
        <Text w={35} size={14.3}>18:55</Text>
        <Text w={76} size={14.3}>19-09-2022</Text>
      </Clock>
      <Notices>
        <Icon size={32} box={32} sw={0}>
          <path fill="#000" d="M0 6h20v17H7l-3 3v-3H0z" />
          <path stroke="#d3d3d3" strokeWidth="1.500" d="M3.500 10.500h13M3.500 14.500h13M3.500 18.500h8" />
          <circle cx="20.500" cy="24" r="9.500" fill="#d3d3d3" stroke="#777" strokeWidth="1" />
          <text x="16.500" y="29.500" fontSize="14.500" fill="#111">3</text>
        </Icon>
      </Notices>
    </Taskbar>
  );
}

export default function App() {
  return (
    <Screen>
      <Global />
      <Browser />
      <Header />
      <Tools />
      <Workspace>
        <LeftSide />
        <MainArea>
          <MainRow>
            <ChartCard />
            <RightSide />
          </MainRow>
          <BottomStrip>
            <Grip $flat />
          </BottomStrip>
        </MainArea>
      </Workspace>
      <TaskbarView />
    </Screen>
  );
}
